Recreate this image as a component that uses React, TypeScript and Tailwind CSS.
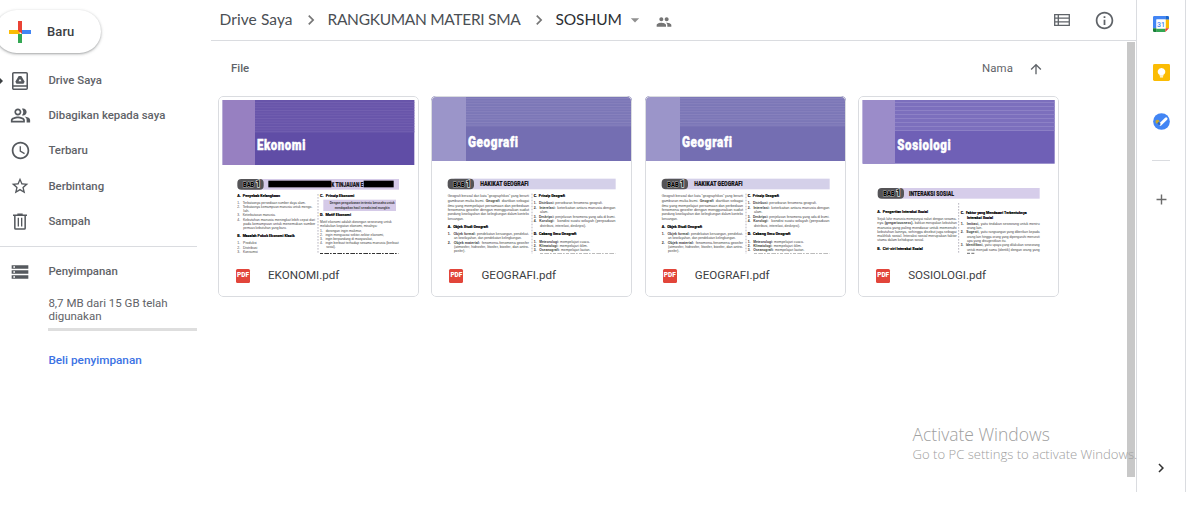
import type { ReactNode } from "react";
import {
  MdAdd,
  MdArrowDropDown,
  MdArrowUpward,
  MdChevronRight,
  MdInfoOutline,
  MdOutlinePeopleAlt,
  MdPeople,
  MdSchedule,
  MdStarBorder,
  MdStorage,
} from "react-icons/md";

type Line = [x: number, y: number, width: number, text: string, kind?: "h" | "b"];

interface Doc {
  file: string;
  title: string;
  titleX: number;
  titleY: number;
  titleW: number;
  banner: { x: number; y: number; w: number; h: number; split: number; stripes: number; gap: number };
  colors: { main: string; side: string; stripe: string; bar: string };
  chapter: { x: number; y: number; end: number; text: string; textX: number; textW: number; blocks: [number, number][] };
  divider: number;
  boxed?: boolean;
  cut: [x1: number, x2: number, width: number, color: string];
  lines: Line[];
}

const ekonomi: Doc = {
  file: "EKONOMI.pdf",
  title: "Ekonomi",
  titleX: 127,
  titleY: 180,
  titleW: 147,
  banner: { x: 24, y: 30, w: 575, h: 195, split: 121, stripes: 128, gap: 8 },
  colors: { main: "#604da6", side: "#9780c1", stripe: "#7562b2", bar: "#d5cae8" },
  chapter: { x: 68, y: 267, end: 553, text: "K TINJAUAN E", textX: 350, textW: 96, blocks: [[161, 189], [447, 90]] },
  divider: 310,
  boxed: true,
  cut: [316, 551, 3, "#333"],
  lines: [
    [68, 320, 128, "A.  Penyebab Kelangkaan", "h"],
    [68, 343, 205, "1.   Terbatasnya persediaan sumber daya alam."],
    [68, 355, 225, "2.   Terbatasnya kemampuan manusia untuk mengo-"],
    [86, 367, 18, "lah."],
    [68, 379, 115, "3.   Keterbatasan manusia."],
    [68, 393, 233, "4.   Kebutuhan manusia meningkat lebih cepat dari"],
    [86, 405, 216, "pada kemampuan untuk menemukan sumber"],
    [86, 417, 130, "pemuas kebutuhan yang baru."],
    [68, 442, 172, "B.  Masalah Pokok Ekonomi Klasik", "h"],
    [68, 463, 58, "1.   Produksi"],
    [68, 476, 60, "2.   Distribusi"],
    [68, 488, 61, "3.   Konsumsi"],
    [316, 320, 103, "C.  Prinsip Ekonomi", "h"],
    [345, 343, 195, "Dengan pengorbanan tertentu berusaha untuk", "b"],
    [360, 356, 165, "mendapatkan hasil semaksimal mungkin", "b"],
    [316, 377, 93, "D.  Motif Ekonomi", "h"],
    [316, 400, 215, "Motif ekonomi adalah dorongan seseorang untuk"],
    [316, 412, 172, "melakukan kegiatan ekonomi, misalnya:"],
    [316, 425, 126, "1.   dorongan ingin makmur,"],
    [316, 438, 192, "2.   ingin menguasai sektor-sektor ekonomi,"],
    [316, 451, 158, "3.   ingin berpandang di masyarakat,"],
    [316, 463, 236, "4.   ingin berbuat terhadap sesama manusia (berbuat"],
    [335, 475, 28, "sosial)."],
  ],
};

const geografi: Doc = {
  file: "GEOGRAFI.pdf",
  title: "Geografi",
  titleX: 121,
  titleY: 172,
  titleW: 152,
  banner: { x: 10, y: 18, w: 603, h: 195, split: 115, stripes: 110, gap: 8 },
  colors: { main: "#746eb2", side: "#9b95c9", stripe: "#8a84bf", bar: "#d4d0e9" },
  chapter: { x: 60, y: 266, end: 564, text: "HAKIKAT GEOGRAFI", textX: 158, textW: 145, blocks: [] },
  divider: 313,
  cut: [337, 563, 2, "#999"],
  lines: [
    [60, 322, 244, "Geografi berasal dari kata “geographikos” yang berarti"],
    [60, 336, 110, "gambaran muka bumi."],
    [174, 336, 42, "Geografi", "b"],
    [222, 336, 82, "diartikan sebagai"],
    [60, 350, 244, "ilmu yang mempelajari persamaan dan perbedaan"],
    [60, 363, 244, "fenomena geosfer dengan menggunakan sudut"],
    [60, 376, 244, "pandang kewilayahan dan kelingkungan dalam konteks"],
    [60, 389, 48, "keruangan."],
    [60, 415, 121, "A.  Objek Studi Geografi", "h"],
    [60, 434, 84, "1.   Objek formal:", "b"],
    [148, 434, 156, "pendekatan keruangan, pendekat-"],
    [79, 447, 203, "an kewilayahan, dan pendekatan kelingkungan."],
    [60, 461, 97, "2.   Objek material:", "b"],
    [162, 461, 142, "fenomena-fenomena geosfer"],
    [79, 474, 225, "(atmosfer, hidrosfer, litosfer, biosfer, dan antro-"],
    [79, 487, 34, "posfer)."],
    [318, 322, 94, "C.  Prinsip Geografi", "h"],
    [318, 343, 62, "1.   Distribusi:", "b"],
    [383, 343, 142, "persebaran fenomena geografi."],
    [318, 357, 66, "2.   Interelasi:", "b"],
    [389, 357, 174, "keterkaitan antara manusia dengan"],
    [337, 370, 25, "alam."],
    [318, 383, 62, "3.   Deskripsi:", "b"],
    [383, 383, 180, "penjelasan fenomena yang ada di bumi."],
    [318, 397, 62, "4.   Korologi:", "b"],
    [389, 397, 174, "kondisi suatu wilayah (perpaduan"],
    [337, 410, 138, "distribusi, interelasi, deskripsi)."],
    [318, 435, 128, "D.  Cabang Ilmu Geografi", "h"],
    [318, 458, 76, "1.   Meteorologi:", "b"],
    [397, 458, 90, "mempelajari cuaca."],
    [318, 471, 74, "2.   Klimatologi:", "b"],
    [396, 471, 84, "mempelajari iklim."],
    [318, 484, 78, "3.   Oseanografi:", "b"],
    [400, 484, 88, "mempelajari lautan."],
  ],
};

const sosiologi: Doc = {
  file: "SOSIOLOGI.pdf",
  title: "Sosiologi",
  titleX: 128,
  titleY: 181,
  titleW: 162,
  banner: { x: 24, y: 30, w: 576, h: 191, split: 121, stripes: 122, gap: 12 },
  colors: { main: "#6f60b6", side: "#9b8cc9", stripe: "#9186c8", bar: "#d6cdea" },
  chapter: { x: 69, y: 294, end: 555, text: "INTERAKSI SOSIAL", textX: 163, textW: 135, blocks: [] },
  divider: 312,
  cut: [337, 359, 4, "#888"],
  lines: [
    [68, 370, 152, "A.  Pengertian Interaksi Sosial", "h"],
    [68, 390, 238, "Sejak lahir manusia mempunyai naluri dengan sesama-"],
    [68, 403, 18, "nya"],
    [90, 403, 86, "(gregariousness).", "b"],
    [180, 403, 126, "bahkan merupakan kebutuhan"],
    [68, 416, 238, "manusia yang paling mendasar untuk memenuhi"],
    [68, 429, 238, "kebutuhan lainnya, sehingga disebut juga sebagai"],
    [68, 442, 238, "makhluk sosial. Interaksi sosial merupakan faktor"],
    [68, 454, 140, "utama dalam kehidupan sosial."],
    [68, 480, 136, "B.  Ciri-ciri Interaksi Sosial", "h"],
    [318, 371, 198, "C.  Faktor yang Mendasari Terbentuknya", "h"],
    [337, 386, 78, "Interaksi Sosial", "h"],
    [318, 404, 56, "1.   Imitasi,", "b"],
    [378, 404, 177, "yaitu tindakan seseorang untuk meniru"],
    [337, 417, 46, "orang lain."],
    [318, 430, 56, "2.   Sugesti,", "b"],
    [378, 430, 177, "yaitu rangsangan yang diberikan kepada"],
    [337, 443, 218, "orang lain hingga orang yang dipengaruhi menuruti"],
    [337, 456, 118, "apa yang disugestikan itu."],
    [318, 469, 68, "3.   Identifikasi,", "b"],
    [390, 469, 165, "yaitu upaya yang dilakukan seseorang"],
    [337, 482, 218, "untuk menjadi sama (identik) dengan orang yang"],
  ],
};

const docs: Doc[] = [ekonomi, geografi, geografi, sosiologi];

/* Miniature of the first page of a PDF. */
function PagePreview({ doc }: { doc: Doc }) {
  const { banner: b, colors: c, chapter: ch } = doc;
  const stripes: number[] = [];
  for (let y = b.y + 6; y <= doc.banner.stripes; y += b.gap) stripes.push(y);
  return (
    <svg viewBox="10 18 603 474" className="block h-[158px] w-full" preserveAspectRatio="none">
      <rect x={b.x} y={b.y} width={b.w} height={b.h} fill={c.main} />
      <rect x={b.split} y={b.y} width={b.x + b.w - b.split} height={b.stripes - b.y} fill={c.stripe} opacity={0.4} />
      {stripes.map((y) => (
        <rect key={y} x={b.split} y={y} width={b.x + b.w - b.split} height={2.4} fill={c.stripe} />
      ))}
      <rect x={b.x} y={b.y} width={b.split - b.x} height={b.h} fill={c.side} />
      <text
        x={doc.titleX}
        y={doc.titleY}
        textLength={doc.titleW}
        lengthAdjust="spacingAndGlyphs"
        fontFamily="Roboto"
        fontWeight={900}
        fontSize={46}
        letterSpacing={2.5}
        fill="#fff"
        stroke="#fff"
        strokeWidth={1.5}
      >
        {doc.title}
      </text>

      <rect x={ch.x + 20} y={ch.y} width={ch.end - ch.x - 20} height={32} fill={c.bar} />
      <rect x={ch.x} y={ch.y} width={79} height={32} rx={12} fill="#555457" />
      <text
        x={ch.x + 17}
        y={ch.y + 24}
        textLength={34}
        lengthAdjust="spacingAndGlyphs"
        fontFamily="Roboto"
        fontWeight={900}
        fontSize={22}
        fill="#000"
        stroke="#b5b5b5"
        strokeWidth={3}
        paintOrder="stroke"
      >
        BAB
      </text>
      <text x={ch.x + 55} y={ch.y + 25} fontFamily="Roboto" fontWeight={900} fontSize={25} fill="#222" stroke="#ddd" strokeWidth={4} paintOrder="stroke">
        1
      </text>
      {ch.blocks.map(([x, w]) => (
        <rect key={x} x={x} y={ch.y + 5} width={w} height={20} fill="#000" />
      ))}
      <text x={ch.textX} y={ch.y + 23} textLength={ch.textW} lengthAdjust="spacingAndGlyphs" fontFamily="Roboto" fontWeight={900} fontSize={20} fill="#161418" stroke="#161418" strokeWidth={0.5}>
        {ch.text}
      </text>

      {doc.boxed && <rect x={326} y={329} width={218} height={34} fill="#d5cae8" />}
      <line x1={doc.divider} x2={doc.divider} y1={ch.y + 45} y2={492} stroke="#a9a6b3" strokeWidth={2.5} strokeDasharray="5 4" />
      {doc.lines.map(([x, y, w, text, kind], i) => (
        <text
          key={i}
          x={x}
          y={y}
          textLength={w}
          lengthAdjust="spacingAndGlyphs"
          xmlSpace="preserve"
          fontFamily={kind === "h" ? "Roboto" : "Liberation Sans"}
          fontWeight={kind === "h" ? 900 : kind === "b" ? 700 : 400}
          fontSize={kind === "h" ? 12.5 : 10.5}
          fill={kind === "h" ? "#000" : kind === "b" ? "#333" : "#444"}
          stroke={kind === "h" ? "#000" : "none"}
          strokeWidth={0.4}
        >
          {text}
        </text>
      ))}
      <line x1={doc.cut[0]} x2={doc.cut[1]} y1={490.5} y2={490.5} stroke={doc.cut[3]} strokeWidth={doc.cut[2]} strokeDasharray="9 4 14 3 5 4" />
    </svg>
  );
}

function FileCard({ doc }: { doc: Doc }) {
  return (
    <article className="relative h-[201px] w-[201px] shrink-0 overflow-hidden rounded-[5px] bg-white">
      <PagePreview doc={doc} />
      <div className="flex h-[43px] items-center pl-[18px]">
        <span className="flex h-[14px] w-[14px] items-center justify-center rounded-[1.5px] bg-[#e2453a] font-['Roboto'] text-[6.5px] font-black text-white">
          PDF
        </span>
        <span className="ml-[18px] font-['Roboto'] text-[11.6px] text-[#3c4043]">{doc.file}</span>
      </div>
      <div className="pointer-events-none absolute inset-0 rounded-[5px] border border-[#dadce0]" />
    </article>
  );
}

function DriveIcon() {
  return (
    <svg viewBox="0 0 48 54" className="h-[18px] w-4" fill="none" stroke="#55595e" strokeWidth={4.6}>
      <rect x={2.3} y={2.3} width={43.4} height={49.4} rx={3} />
      <path d="M2 42h44" />
      <path d="M20 12h8l10 17-3.500 6h-21l-3.500-6z" fill="#55595e" stroke="none" />
      <path d="M24 20l4.500 8h-9z" fill="#fff" stroke="none" />
    </svg>
  );
}

function TrashIcon() {
  return (
    <svg viewBox="0 0 42 50" className="h-[17px] w-[14px]" fill="none" stroke="#55595e" strokeWidth={4.600}>
      <path d="M0 6h42M13 3h16" />
      <path d="M5.500 6v39a2.500 2.500 0 0 0 2.500 2.500h26a2.500 2.500 0 0 0 2.500-2.500V6" />
      <path d="M16 14v26M26 14v26" strokeWidth={4} />
    </svg>
  );
}

function ListIcon() {
  return (
    <svg viewBox="0 0 16 12" className="h-3 w-4" fill="none" stroke="#5f6368" strokeWidth={1.300}>
      <path d="M.7.7h14.600v10.600H.7zM1 4.200h14M1 7.800h14M4.300 1v10" />
    </svg>
  );
}

function CalendarIcon() {
  return (
    <svg viewBox="0 0 48 48" className="h-4 w-4">
      <path d="M4 0h33v11H11v26H0V4a4 4 0 0 1 4-4z" fill="#4285f4" />
      <path d="M37 0h7a4 4 0 0 1 4 4v7H37z" fill="#1967d2" />
      <path d="M37 11h11v26H37z" fill="#fbbc04" />
      <path d="M11 37h26v11H11z" fill="#34a853" />
      <path d="M0 37h11v11H4a4 4 0 0 1-4-4z" fill="#188038" />
      <path d="M37 37h11L37 48z" fill="#ea4335" />
      <path d="M10 10h28v28H10z" fill="#fff" />
      <text x={24} y={31.500} textAnchor="middle" fontFamily="Roboto" fontWeight={500} fontSize={21} fill="#4285f4">
        31
      </text>
    </svg>
  );
}

function KeepIcon() {
  return (
    <svg viewBox="0 0 48 48" className="h-[17px] w-[17px]">
      <rect width={48} height={48} rx={4} fill="#fbbc04" />
      <path d="M24 11a10.500 10.500 0 0 0-5.500 19.500V33h11v-2.500A10.500 10.500 0 0 0 24 11z" fill="#fff" />
      <path d="M19.500 34.500h9V38h-9z" fill="#fff" />
    </svg>
  );
}

function TasksIcon() {
  return (
    <svg viewBox="0 0 48 48" className="h-[17px] w-[17px]">
      <circle cx={24} cy={24} r={23.500} fill="#4285f4" />
      <path d="M21 32L37 16" stroke="#fff" strokeWidth={8} strokeLinecap="round" />
      <circle cx={12.500} cy={24.500} r={5.500} fill="#c9a92c" />
      <path d="M14 27l6 6" stroke="#2a66c8" strokeWidth={6} />
    </svg>
  );
}

function NavRow({ icon, label }: { icon: ReactNode; label: string }) {
  return (
    <a className="flex h-[35.2px] items-center font-['Roboto'] text-[11.4px] font-medium text-[#5f6368]">
      <span className="flex w-10 items-center justify-center text-[#55595e]">{icon}</span>
      <span className="ml-[8.4px] whitespace-nowrap">{label}</span>
    </a>
  );
}

function Sidebar() {
  return (
    <aside className="relative flex w-[211px] shrink-0 flex-col overflow-hidden pt-[10px]">
      <button className="-ml-[5px] flex h-[43px] w-[106px] shrink-0 items-center rounded-full bg-white shadow-[0_1px_2px_rgba(60,64,67,0.35),0_1px_3px_1px_rgba(60,64,67,0.12)]">
        <svg viewBox="0 0 22 22" className="ml-[14px] h-[22px] w-[22px]">
          <path d="M9 0h4v9l-4 4z" fill="#ea4335" />
          <path d="M0 9h9l2 4H0z" fill="#fbbc04" />
          <path d="M13 9h9v4h-9z" fill="#4285f4" />
          <path d="M9 13h4v9H9z" fill="#34a853" />
          <path d="M9 9h4v4z" fill="#ea4335" />
        </svg>
        <span className="ml-4 font-['Roboto'] text-[13px] font-medium tracking-[0.1px] text-[#3c4043]">Baru</span>
      </button>

      <nav className="mt-[10px] flex flex-col">
        <NavRow icon={<DriveIcon />} label="Drive Saya" />
        <NavRow icon={<MdOutlinePeopleAlt size={21} />} label="Dibagikan kepada saya" />
        <NavRow icon={<MdSchedule size={21} />} label="Terbaru" />
        <NavRow icon={<MdStarBorder size={20} />} label="Berbintang" />
        <NavRow icon={<TrashIcon />} label="Sampah" />
      </nav>
      <div className="absolute top-[78px] left-0 h-0 w-0 border-y-[3px] border-l-[3px] border-y-transparent border-l-[#3c4043]" />

      <hr className="mt-[7px] mr-[14px] border-[#dadce0]" />
      <div className="mt-[7px]">
        <NavRow icon={<MdStorage size={20} />} label="Penyimpanan" />
      </div>
      <div className="ml-[48.4px] w-[149px] font-['Roboto'] text-[11.5px] text-[#5f6368]">
        <p className="mt-2 leading-[13px]">8,7 MB dari 15 GB telah digunakan</p>
        <div className="mt-[5px] h-[2.5px] bg-[#dedede]" />
        <a className="mt-[21px] block text-[11.75px] leading-4 font-medium text-[#3b72e4]">Beli penyimpanan</a>
      </div>
    </aside>
  );
}

function Header() {
  return (
    <header className="flex h-[41px] shrink-0 items-center border-b border-[#dadce0] pr-[21px] pl-[8.500px] font-['Lato'] text-[15.500px] whitespace-nowrap text-[#4b4f54]">
      <span className="w-[74px] tracking-[0.08px]">Drive Saya</span>
      <MdChevronRight size={20} className="mx-[7px] text-[#777]" />
      <span className="w-[194px] tracking-[-0.3px]">RANGKUMAN MATERI SMA</span>
      <MdChevronRight size={20} className="mx-[7px] text-[#777]" />
      <span className="w-[66.500px] tracking-[-0.1px] text-[#2c2f33]">SOSHUM</span>
      <MdArrowDropDown size={20} className="ml-[3px] text-[#909090]" />
      <MdPeople size={16} className="mt-[3px] ml-[11px] text-[#757575]" />
      <span className="ml-auto flex items-center gap-6 text-[#5f6368]">
        <ListIcon />
        <MdInfoOutline size={21} />
      </span>
    </header>
  );
}

function AppRail() {
  return (
    <aside className="flex h-[492px] w-[50px] shrink-0 flex-col items-center border-x border-[#dadce0] pt-4">
      <CalendarIcon />
      <div className="mt-8">
        <KeepIcon />
      </div>
      <div className="mt-8">
        <TasksIcon />
      </div>
      <div className="mt-[30px] h-px w-[18px] bg-[#dadce0]" />
      <MdAdd size={17} className="mt-[30px] text-[#6b6b6b]" />
      <MdChevronRight size={18} className="mt-auto mb-[15px] text-[#333]" />
    </aside>
  );
}

export default function App() {
  return (
    <div className="relative flex h-[515px] w-[1200px] overflow-hidden bg-white">
      <Sidebar />
      <div className="flex w-[925px] shrink-0 flex-col">
        <Header />
        <div className="flex h-[436px]">
          <main className="flex-1 pl-[7px]">
            <div className="flex h-[55px] items-center pr-[83px] pl-[13px] font-['Roboto'] text-[11.4px] font-medium text-[#5f6368]">
              <span>File</span>
              <span className="ml-auto font-normal tracking-[0.15px]">Nama</span>
              <MdArrowUpward size={16} className="ml-[15px]" />
            </div>
            <section className="flex gap-[12.4px]">
              {docs.map((doc, i) => (
                <FileCard key={i} doc={doc} />
              ))}
            </section>
          </main>
          <div className="mt-px mr-px w-2 bg-[#c8c8c8]" />
        </div>
      </div>
      <AppRail />
      <div className="pointer-events-none absolute top-[423px] left-[912.5px] font-['Open_Sans'] font-light whitespace-nowrap text-[#a0a0a0]">
        <p className="text-[17.500px] leading-[22px]">Activate Windows</p>
        <p className="text-[13.1px] leading-[18px]">Go to PC settings to activate Windows.</p>
      </div>
    </div>
  );
}
